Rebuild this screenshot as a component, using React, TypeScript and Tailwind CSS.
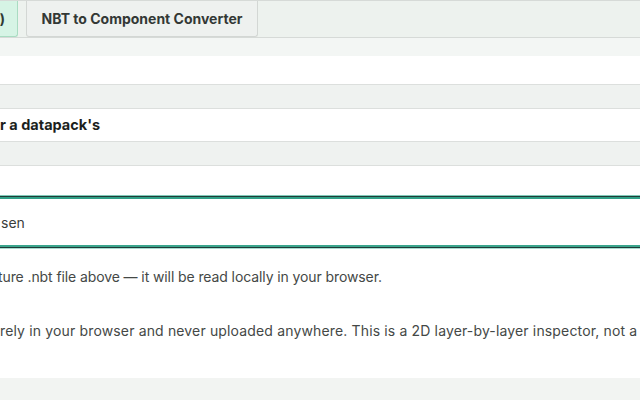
import React from 'react';

const sans = "font-['Inter','Liberation_Sans',sans-serif]";

function Tabs() {
  return (
    <div className="flex h-[38px] items-stretch gap-2 border-t border-b border-[#d6dad7] bg-[#edf2ee] pr-2">
      {/* active tab, scrolled mostly out of view */}
      <button className="-ml-[6px] flex w-[24px] shrink-0 items-center justify-end rounded-b-[3px] border border-t-0 border-[#a9dcc2] bg-[#d6f4e5] pr-[12px] text-[14px] font-bold text-[#2f3a34]">
        )
      </button>
      <button className="flex w-[232px] shrink-0 items-center justify-center rounded-b-[3px] border border-t-0 border-[#d3d7d4] bg-[#eef1ef] text-[14px] font-bold text-[#333835]">
        NBT to Component Converter
      </button>
    </div>
  );
}

function Band() {
  return <div className="h-[25px] border-y border-[#dcdfdd] bg-[#eff2f0]" />;
}

export default function App() {
  return (
    <div className={`h-[400px] w-[640px] overflow-hidden bg-white ${sans}`}>
      <Tabs />
      <div className="h-[18px] bg-[#f3f6f4]" />
      <div className="h-[28px] bg-white" />
      <Band />
      <div className="flex h-[32px] items-center text-[14.5px] font-bold text-[#1c1f1d]">
        r a datapack's
      </div>
      <Band />
      <div className="h-[29px] bg-white" />

      {/* file picker field */}
      <div className="border-t border-[#7fc9b8]">
        <div className="border-t border-[#1f3b37]">
          <div className="border-t-2 border-[#2f9f86]" />
        </div>
      </div>
      <div className="flex h-[46px] items-center pl-[1px] text-[14px] text-[#3a3d3b]">sen</div>
      <div className="border-t-2 border-[#3aa58c]">
        <div className="border-t border-[#1f3b37]">
          <div className="border-t border-[#a8dcd0]" />
        </div>
      </div>

      <div className="pt-[18px] text-[14px] leading-[20px] text-[#444846]">
        <p className="-ml-[2px] whitespace-nowrap tracking-[-0.1px]">
          ture .nbt file above — it will be read locally in your browser.
        </p>
        <p className="mt-[34px] whitespace-nowrap tracking-[0.15px]">
          rely in your browser and never uploaded anywhere. This is a 2D layer-by-layer inspector, not a
        </p>
      </div>
      <div className="mt-[37px] h-[30px] bg-[#f2f4f2]" />
    </div>
  );
}
